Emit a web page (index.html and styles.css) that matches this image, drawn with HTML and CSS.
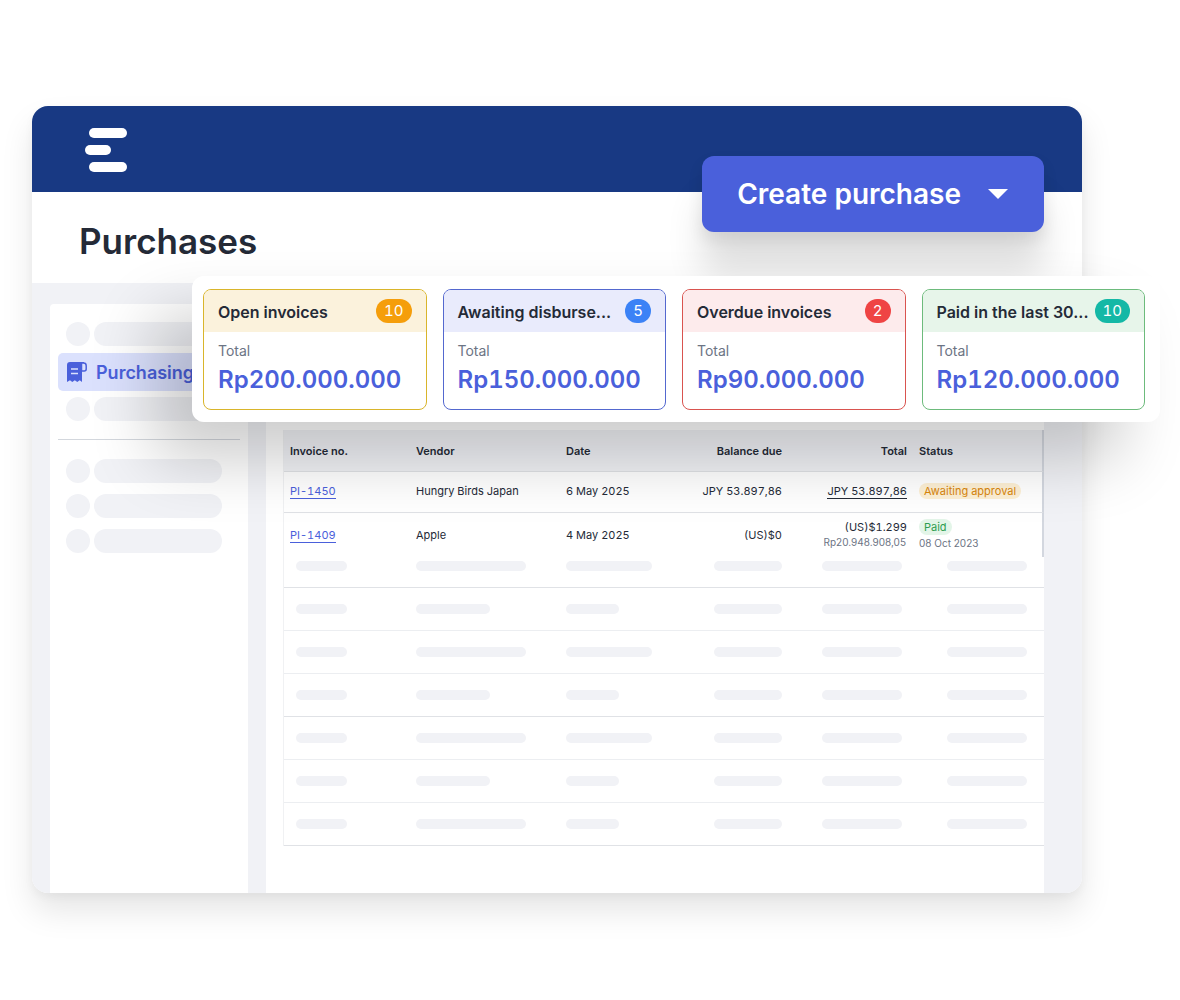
FILE: index.html
```html
<!DOCTYPE html>
<html lang="en">

<head>
	<meta charset="UTF-8">
	<meta name="viewport" content="width=device-width, initial-scale=1">
	<title>Purchases</title>
	<link rel="stylesheet" href="styles.css">
</head>

<body>
	<div class="window">
		<header class="topbar">
			<svg class="logo" viewBox="0 0 42 44" aria-hidden="true">
				<rect x="4" y="0" width="38" height="10" rx="5" />
				<rect x="0" y="17" width="26" height="10" rx="5" />
				<rect x="4" y="34" width="38" height="10" rx="5" />
			</svg>
		</header>
		<div class="title-bar">
			<h1>Purchases</h1>
		</div>
		<div class="content">
			<nav class="sidebar">
				<div class="nav-item"><span class="dot"></span><span class="pill"></span></div>
				<a class="nav-link" href="#">
					<svg class="nav-icon" viewBox="0 0 20 20" aria-hidden="true">
						<path d="M3 0h14v2h-2v18l-2.300-1.700-2.400 1.700-2.500-1.700L5.300 20 3 18.300 0 20V3a3 3 0 0 1 3-3z" fill="#4a60db" />
						<path d="M14.500 1h2a2.700 2.700 0 0 1 2.700 2.700V7a2 2 0 0 1-2 2h-2.700z" fill="#dbe1fd" stroke="#4a60db" stroke-width="1.500" />
						<path d="M4 7h7M4 11.500h7" stroke="#dbe1fd" stroke-width="1.500" />
					</svg>
					Purchasing
				</a>
				<div class="nav-item"><span class="dot"></span><span class="pill"></span></div>
				<hr>
				<div class="nav-group">
					<div class="nav-item"><span class="dot"></span><span class="pill"></span></div>
					<div class="nav-item"><span class="dot"></span><span class="pill"></span></div>
					<div class="nav-item"><span class="dot"></span><span class="pill"></span></div>
				</div>
			</nav>
			<main>
				<table class="invoice-table">
					<colgroup>
						<col class="col-number">
						<col class="col-vendor">
						<col class="col-date">
						<col class="col-balance">
						<col class="col-total">
						<col class="col-status">
					</colgroup>
					<thead>
						<tr>
							<th>Invoice no.</th>
							<th>Vendor</th>
							<th>Date</th>
							<th class="num">Balance due</th>
							<th class="num">Total</th>
							<th>Status</th>
						</tr>
					</thead>
					<tbody class="invoices">
						<tr>
							<td><a href="#">PI-1450</a></td>
							<td>Hungry Birds Japan</td>
							<td>6 May 2025</td>
							<td class="num">JPY 53.897,86</td>
							<td class="num"><a class="amount" href="#">JPY 53.897,86</a></td>
							<td><span class="tag tag-waiting">Awaiting approval</span></td>
						</tr>
						<tr>
							<td><a href="#">PI-1409</a></td>
							<td>Apple</td>
							<td>4 May 2025</td>
							<td class="num">(US)$0</td>
							<td class="num">(US)$1.299<small>Rp20.948.908,05</small></td>
							<td><span class="tag tag-paid">Paid</span><small>08 Oct 2023</small></td>
						</tr>
					</tbody>
					<tbody class="placeholders" id="placeholders">
						<!-- Loading rows -->
					</tbody>
				</table>
			</main>
		</div>

		<button class="create-button" type="button">
			Create purchase
			<svg class="caret" viewBox="0 0 20 10" aria-hidden="true"><path d="M0 0h20L10 10z" /></svg>
		</button>

		<section class="summary">
			<article class="card card-open">
				<div class="card-head">
					<h2>Open invoices</h2><span class="badge">10</span>
				</div>
				<div class="card-body">
					<p>Total</p>
					<strong>Rp200.000.000</strong>
				</div>
			</article>
			<article class="card card-awaiting">
				<div class="card-head">
					<h2>Awaiting disburse...</h2><span class="badge">5</span>
				</div>
				<div class="card-body">
					<p>Total</p>
					<strong>Rp150.000.000</strong>
				</div>
			</article>
			<article class="card card-overdue">
				<div class="card-head">
					<h2>Overdue invoices</h2><span class="badge">2</span>
				</div>
				<div class="card-body">
					<p>Total</p>
					<strong>Rp90.000.000</strong>
				</div>
			</article>
			<article class="card card-paid">
				<div class="card-head">
					<h2>Paid in the last 30...</h2><span class="badge">10</span>
				</div>
				<div class="card-body">
					<p>Total</p>
					<strong>Rp120.000.000</strong>
				</div>
			</article>
		</section>
	</div>

	<script>
		// bar widths per row: number, vendor, date, balance, total, status
		const rows = [
			[51, 110, 86, 68, 80, 80],
			[51, 74, 53, 68, 80, 80],
			[51, 110, 86, 68, 80, 80],
			[51, 74, 53, 68, 80, 80],
			[51, 110, 86, 68, 80, 80],
			[51, 74, 53, 68, 80, 80],
			[51, 110, 53, 68, 80, 80],
		];

		const tbody = document.getElementById('placeholders');
		rows.forEach(widths => {
			const row = document.createElement('tr');
			row.innerHTML = widths.map(w => `<td><span class="bar" style="width: ${w}px"></span></td>`).join('');
			tbody.appendChild(row);
		});
	</script>
</body>

</html>
```
FILE: styles.css
```css
* {
	box-sizing: border-box;
}

body {
	margin: 0;
	padding: 106px 98px 106px 32px;
	font-family: Inter, "Liberation Sans", sans-serif;
	color: #242a37;
	background: #ffffff;
}

h1,
h2,
p {
	margin: 0;
}

.window {
	position: relative;
	border-radius: 16px;
	background: #ffffff;
	box-shadow: 0 18px 32px rgba(0, 0, 0, 0.1), 0 4px 10px rgba(0, 0, 0, 0.04);
}

.topbar {
	height: 86px;
	padding: 22px 53px;
	border-radius: 16px 16px 0 0;
	background: #183983;
}

.logo {
	display: block;
	width: 42px;
	height: 44px;
	fill: #ffffff;
}

.title-bar {
	padding: 27px 47px 20px;
}

h1 {
	font-size: 35px;
	line-height: 44px;
	font-weight: 600;
}

.content {
	display: flex;
	gap: 18px;
	padding: 21px 38px 0 18px;
	border-radius: 0 0 16px 16px;
	background: #f1f2f6;
}

/* Sidebar */
.sidebar {
	flex: 0 0 198px;
	padding: 18px 8px;
	border-radius: 4px 4px 0 0;
	background: #ffffff;
}

.nav-item {
	display: flex;
	gap: 4px;
	padding-left: 8px;
}

.dot,
.pill {
	height: 24px;
	border-radius: 12px;
	background: #f1f2f6;
}

.dot {
	width: 24px;
}

.pill {
	width: 128px;
}

.nav-link {
	display: flex;
	align-items: center;
	gap: 9px;
	height: 38px;
	margin: 7px 0 6px;
	padding: 0 9px;
	border-radius: 5px;
	background: #dbe1fd;
	color: #4a60db;
	font-size: 18px;
	font-weight: 600;
	text-decoration: none;
}

.nav-icon {
	width: 20px;
	height: 20px;
}

.sidebar hr {
	height: 1px;
	margin: 18px 0 19px;
	border: none;
	background: #d3d7dd;
}

.nav-group {
	display: grid;
	gap: 11px;
}

/* Invoice table */
main {
	flex: 1;
	padding: 126px 0 47px 17px;
	background: #ffffff;
}

.invoice-table {
	width: 100%;
	table-layout: fixed;
	border-collapse: separate;
	border-spacing: 0;
	border-left: 1px solid #f0f1f3;
	font-size: 11px;
	line-height: 14px;
}

.col-number {
	width: 126px;
}

.col-vendor {
	width: 150px;
}

.col-date {
	width: 128px;
}

.col-balance {
	width: 100px;
}

.col-total {
	width: 125px;
}

th,
td {
	padding: 0 6px;
	border-bottom: 1px solid #e0e2e6;
	text-align: left;
	white-space: nowrap;
}

th {
	height: 42px;
	background: #f1f2f6;
	font-weight: 600;
}

.num {
	text-align: right;
}

thead th:last-child,
.invoices td:last-child {
	border-right: 2px solid #d3d7df;
}

.invoices td {
	height: 41px;
	padding-bottom: 2px;
	font-feature-settings: "tnum";
}

.invoices tr:last-child td {
	height: 44px;
	padding-bottom: 1px;
	border-bottom: none;
}

.invoices a {
	border-bottom: 1px solid #4a60db;
	color: #4a60db;
	text-decoration: none;
}

.invoices .amount {
	border-color: #242a37;
	color: #242a37;
}

small {
	display: block;
	padding: 1px 1px 0 0;
	color: #6c7484;
	font-size: 10px;
	font-feature-settings: normal;
}

.tag {
	display: inline-block;
	padding: 1px 5px;
	border-radius: 8px;
}

.tag-waiting {
	background: #fdf0d5;
	color: #d9860b;
}

.tag-paid {
	background: #e3f5e8;
	color: #2f9e4f;
}

.placeholders td {
	height: 43px;
	border-color: #eceef1;
}

.placeholders tr:first-child td {
	height: 31px;
	padding-bottom: 12px;
	border-color: #e0e2e6;
}

.placeholders tr:nth-child(4) td,
.placeholders tr:last-child td {
	border-color: #e0e2e6;
}

.placeholders td:first-child {
	padding-left: 12px;
}

.placeholders td:nth-child(4) {
	padding-left: 26px;
}

.placeholders td:nth-child(5),
.placeholders td:last-child {
	padding-left: 34px;
}

.bar {
	display: block;
	height: 10px;
	border-radius: 5px;
	background: #f1f2f6;
}

/* Floating button */
.create-button {
	position: absolute;
	top: 50px;
	right: 38px;
	display: flex;
	align-items: center;
	gap: 27px;
	height: 76px;
	padding: 0 36px 0 35px;
	border: none;
	border-radius: 12px;
	background: #4a60db;
	box-shadow: 0 8px 16px rgba(0, 0, 0, 0.09), 0 44px 36px rgba(0, 0, 0, 0.12);
	color: #ffffff;
	font-family: inherit;
	font-size: 28px;
	font-weight: 600;
	cursor: pointer;
}

.caret {
	width: 20px;
	height: 10px;
	fill: #ffffff;
}

/* Floating summary cards */
.summary {
	position: absolute;
	top: 170px;
	left: 160px;
	right: -78px;
	display: grid;
	grid-template-columns: repeat(4, 1fr);
	gap: 16px;
	padding: 13px 15px 12px 11px;
	border-radius: 12px;
	background: #ffffff;
	box-shadow: -38px 38px 64px rgba(0, 0, 0, 0.2);
}

.card {
	min-width: 0;
	border: 1px solid;
	border-radius: 8px;
	overflow: hidden;
}

.card-head {
	display: flex;
	align-items: center;
	justify-content: space-between;
	gap: 4px;
	height: 42px;
	padding: 0 14px;
}

.card h2 {
	padding-top: 2px;
	font-size: 16px;
	line-height: 24px;
	font-weight: 600;
	white-space: nowrap;
}

.badge {
	flex-shrink: 0;
	padding: 0 8px;
	border-radius: 12px;
	color: #ffffff;
	font-size: 15px;
	line-height: 24px;
	font-feature-settings: "tnum";
}

.card-body {
	padding: 8px 14px 12px;
}

.card p {
	color: #6c7484;
	font-size: 14px;
	line-height: 22px;
}

.card strong {
	display: block;
	padding-top: 1px;
	color: #4a60db;
	font-size: 24px;
	line-height: 34px;
	font-weight: 600;
	font-feature-settings: "tnum";
}

.card-open {
	border-color: #d9b52b;
}

.card-open .card-head {
	background: #fbf2dc;
}

.card-open .badge {
	background: #f59e0b;
}

.card-awaiting {
	border-color: #5468cf;
}

.card-awaiting .card-head {
	background: #e9ebfc;
}

.card-awaiting .badge {
	background: #3b82f6;
}

.card-overdue {
	border-color: #d9534f;
}

.card-overdue .card-head {
	background: #fdebec;
}

.card-overdue .badge {
	background: #ef4444;
}

.card-paid {
	border-color: #6dbb7c;
}

.card-paid .card-head {
	background: #e7f5ea;
}

.card-paid .badge {
	background: #14b8a6;
}
```
